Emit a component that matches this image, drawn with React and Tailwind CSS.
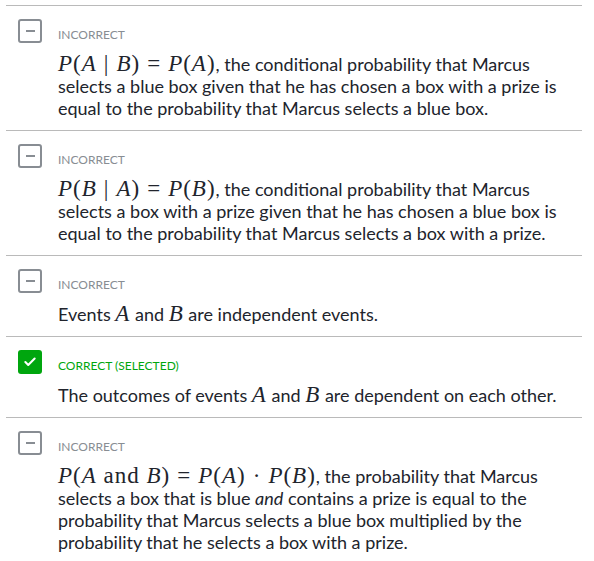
import { Check } from 'lucide-react';

function V({ children }) {
  return <span className="italic">{children}</span>;
}

function M({ children }) {
  return (
    <span className="whitespace-nowrap text-[23px] leading-[0px] tracking-[1px]" style={{ fontFamily: '"Liberation Serif", "DejaVu Serif", serif' }}>
      {children}
    </span>
  );
}

function Op({ children }) {
  return <span className="mx-[7px]">{children}</span>;
}

function StatusIcon({ correct }) {
  if (correct) {
    return (
      <div className="flex h-6 w-6 shrink-0 items-center justify-center rounded-[3px] bg-[#00a60e]">
        <Check className="h-[14px] w-[14px] text-white" strokeWidth={3.5} />
      </div>
    );
  }
  return (
    <div className="flex h-6 w-6 shrink-0 items-center justify-center rounded-[3px] border-2 border-[#888d93]">
      <div className="h-[2px] w-[9px] bg-[#888d93]" />
    </div>
  );
}

function Choice({ correct, label, children }) {
  return (
    <div className="flex gap-4 border-t border-[#bababa] px-3 pb-[11px] pt-[13px]">
      <StatusIcon correct={correct} />
      <div className="flex-1">
        <div className={`pt-[9px] text-[12px] leading-[14px] ${correct ? 'text-[#00a60e]' : 'text-[#888d93]'}`}>
          {label}
        </div>
        <div className="mt-[11px] text-[18px] leading-[22px] text-[#21242c]">{children}</div>
      </div>
    </div>
  );
}

export default function App() {
  return (
    <div className="min-h-screen bg-white pt-[5px]" style={{ fontFamily: 'Lato, "Noto Sans", sans-serif' }}>
      <div className="mx-[6px] w-[576px]">
        <Choice label="INCORRECT">
          <M>
            <V>P</V>(<V>A</V>
            <Op>|</Op>
            <V>B</V>)<Op>=</Op>
            <V>P</V>(<V>A</V>)
          </M>
          , the conditional probability that Marcus selects a blue box given that he has chosen a box with a prize is equal to the
          probability that Marcus selects a blue box.
        </Choice>
        <Choice label="INCORRECT">
          <M>
            <V>P</V>(<V>B</V>
            <Op>|</Op>
            <V>A</V>)<Op>=</Op>
            <V>P</V>(<V>B</V>)
          </M>
          , the conditional probability that Marcus selects a box with a prize given that he has chosen a blue box is equal to the
          probability that Marcus selects a box with a prize.
        </Choice>
        <Choice label="INCORRECT">
          Events{' '}
          <M>
            <V>A</V>
          </M>{' '}
          and{' '}
          <M>
            <V>B</V>
          </M>{' '}
          are independent events.
        </Choice>
        <Choice correct label="CORRECT (SELECTED)">
          The outcomes of events{' '}
          <M>
            <V>A</V>
          </M>{' '}
          and{' '}
          <M>
            <V>B</V>
          </M>{' '}
          are dependent on each other.
        </Choice>
        <Choice label="INCORRECT">
          <M>
            <V>P</V>(<V>A</V> and <V>B</V>)<Op>=</Op>
            <V>P</V>(<V>A</V>)<Op>·</Op>
            <V>P</V>(<V>B</V>)
          </M>
          , the probability that Marcus selects a box that is blue <em>and</em> contains a prize is equal to the probability that
          Marcus selects a blue box multiplied by the probability that he selects a box with a prize.
        </Choice>
      </div>
    </div>
  );
}
